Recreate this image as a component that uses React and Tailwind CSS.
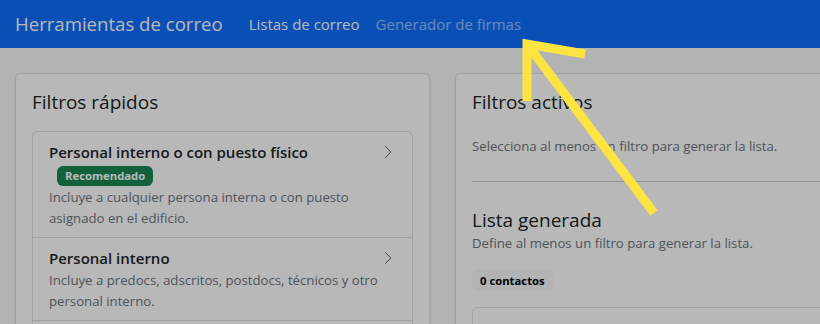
import { useState } from "react";

const filters = [
  {
    id: "fisico",
    title: "Personal interno o con puesto físico",
    recommended: true,
    description: "Incluye a cualquier persona interna o con puesto asignado en el edificio.",
  },
  {
    id: "interno",
    title: "Personal interno",
    description: "Incluye a predocs, adscritos, postdocs, técnicos y otro personal interno.",
  },
];

function ChevronRight() {
  return (
    <svg width="16" height="16" viewBox="0 0 16 16" className="shrink-0 text-[#5c636a]">
      <polyline points="5.3,2.3 10.8,8 5.3,13.7" fill="none" stroke="currentColor" strokeWidth="1" />
    </svg>
  );
}

function FilterItem({ filter, onSelect }) {
  return (
    <button
      type="button"
      onClick={() => onSelect(filter.id)}
      className="block w-full text-left px-4 py-2 border-b border-[#dee2e6]"
    >
      <div className="flex items-center justify-between">
        <span className="text-[15px] leading-6 font-semibold text-[#212529]">{filter.title}</span>
        <ChevronRight />
      </div>
      {filter.recommended && (
        <div className="h-[23px] flex items-center">
          <span className="ml-2 mt-[1px] inline-block rounded-md bg-[#198754] px-[8px] py-[4px] text-[11.3px] leading-none font-bold text-white">
            Recomendado
          </span>
        </div>
      )}
      <p className="text-[13.2px] leading-[21px] text-[#6c757d]">{filter.description}</p>
    </button>
  );
}

export default function App() {
  const [selected, setSelected] = useState([]);

  function toggle(id) {
    setSelected((s) => (s.includes(id) ? s.filter((x) => x !== id) : [...s, id]));
  }

  return (
    <div className="relative w-[820px] h-[324px] overflow-hidden bg-[#f8f9fa] font-['Open_Sans',sans-serif] text-[#212529]">
      <nav className="h-12 bg-[#0d6efd] flex items-center pl-[15px]">
        <span className="text-[18.6px] text-white">Herramientas de correo</span>
        <div className="ml-[26px] flex gap-4 text-[15px]">
          <a className="text-white">Listas de correo</a>
          <a className="text-white/55">Generador de firmas</a>
        </div>
      </nav>

      <main className="flex gap-[25px] pl-[15px] pt-[25px]">
        <section className="w-[415px] h-[300px] shrink-0 rounded-md border border-[#dee2e6] bg-white shadow-sm p-4">
          <h5 className="text-[19px] leading-6 font-medium mb-[17px]">Filtros rápidos</h5>
          <div className="rounded-t-md border border-b-0 border-[#dee2e6] h-[220px]">
            {filters.map((f) => (
              <FilterItem key={f.id} filter={f} onSelect={toggle} />
            ))}
          </div>
        </section>

        <section className="w-[415px] shrink-0 rounded-md border border-[#dee2e6] bg-white shadow-sm p-4">
          <h5 className="text-[19px] leading-6 font-medium">Filtros activos</h5>
          <p className="mt-[22px] text-[13.2px] leading-[21px] text-[#6c757d]">
            {selected.length === 0
              ? "Selecciona al menos un filtro para generar la lista."
              : `${selected.length} filtros seleccionados`}
          </p>
          <hr className="mt-[24px] mb-[26px] border-0 border-t border-[#c8c9ca]" />
          <h4 className="text-[19px] leading-6 font-medium">Lista generada</h4>
          <p className="mt-[1px] text-[13.2px] leading-[21px] text-[#6c757d]">
            Define al menos un filtro para generar la lista.
          </p>
          <span className="mt-[16px] inline-block rounded-md bg-[#f8f9fa] px-[8px] py-[4.5px] text-[11.3px] leading-[12px] font-bold text-black">
            0 contactos
          </span>
          <div className="mt-4 h-24 rounded-md border border-[#dee2e6]" />
        </section>
      </main>

      <div className="absolute inset-0 bg-black/[0.28]" />

      <svg className="absolute inset-0 pointer-events-none" width="820" height="324">
        <path
          d="M527 101 L527 44 L585 54 M527 44 L654 213"
          fill="none"
          stroke="#fde440"
          strokeWidth="9"
          strokeLinejoin="miter"
        />
      </svg>
    </div>
  );
}
